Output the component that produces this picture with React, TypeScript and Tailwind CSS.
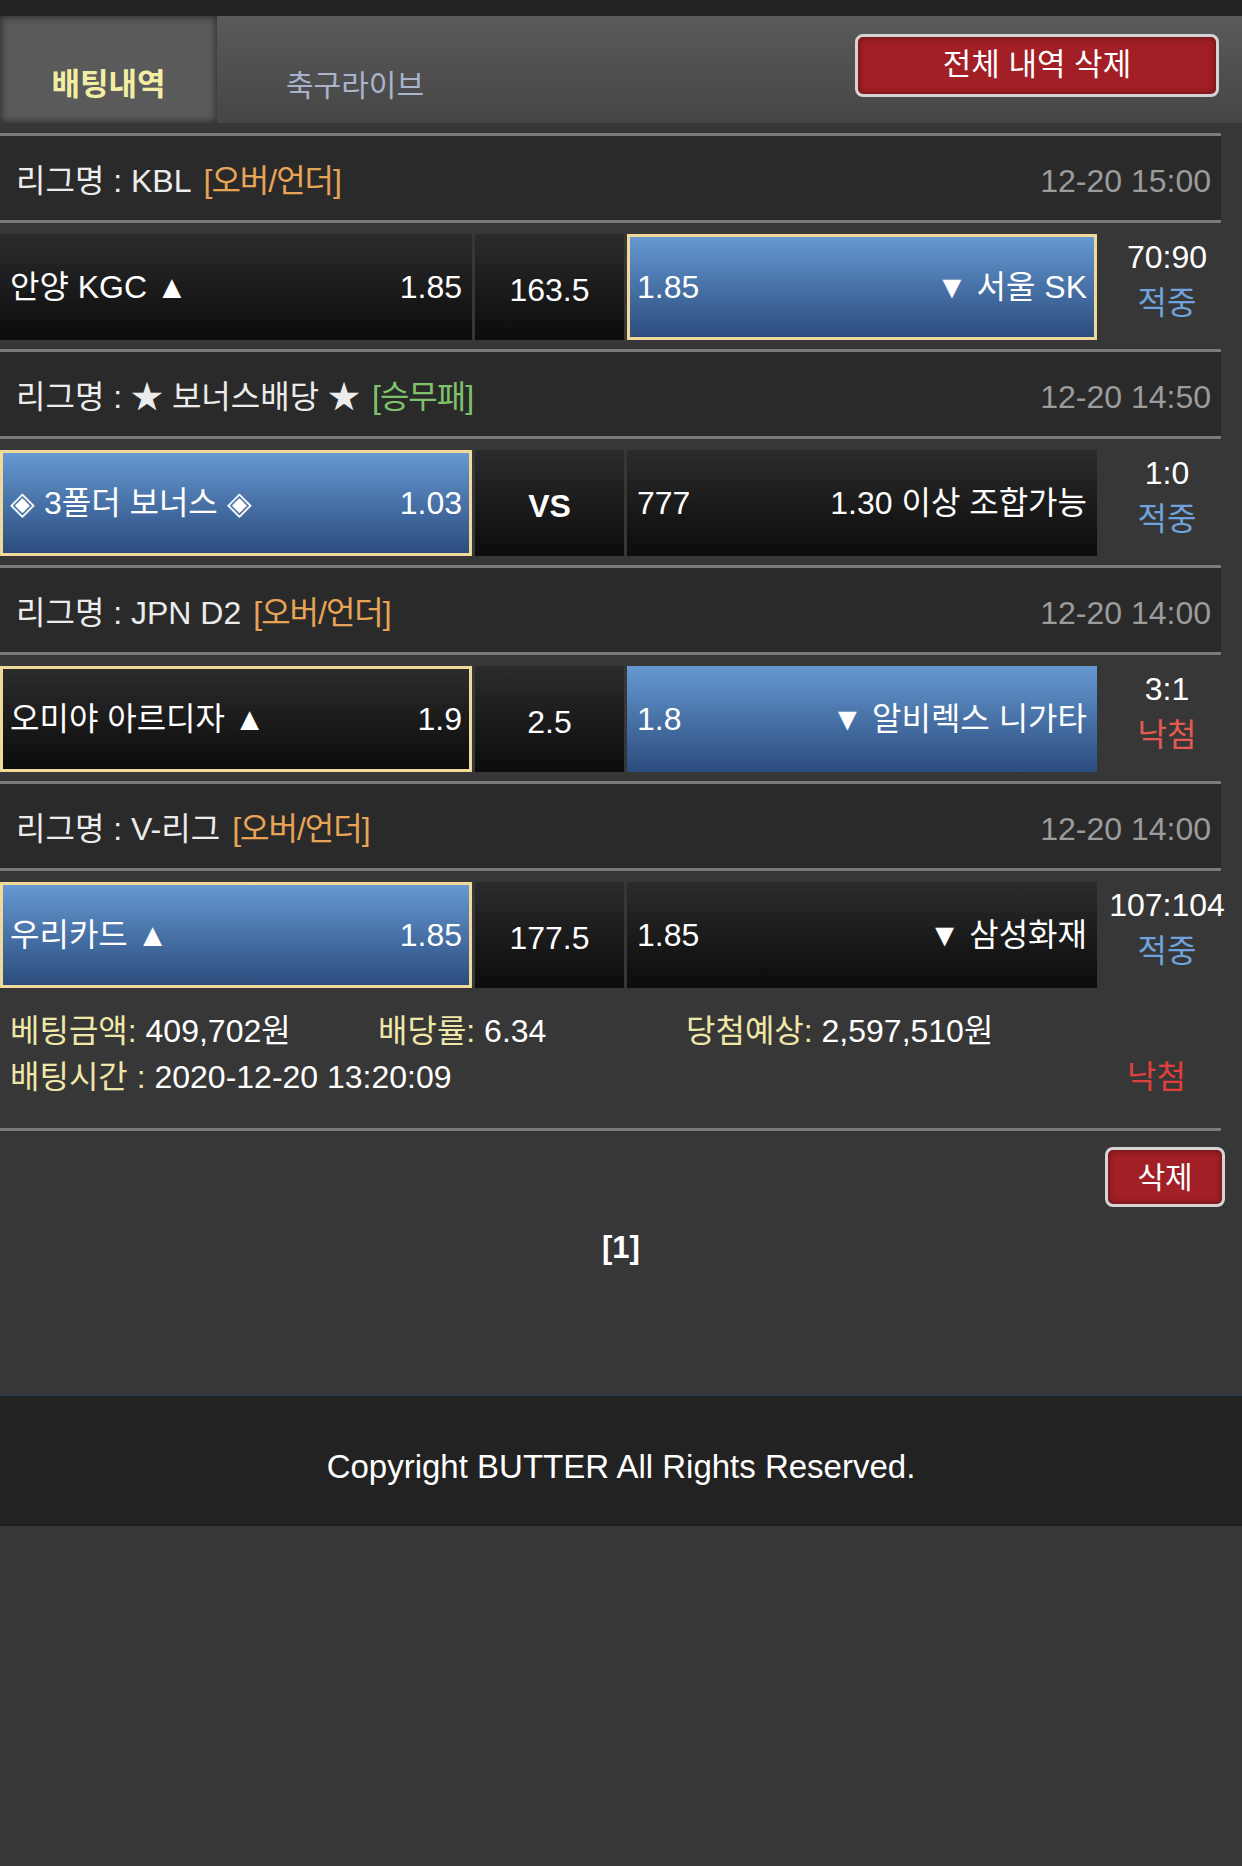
import clsx from "clsx";

type Tone = "dark" | "blue";

interface Side {
  name: string;
  odds: string;
  tone: Tone;
  picked?: boolean;
}

interface Game {
  league: string;
  tag: string;
  tagColor: string;
  time: string;
  home: Side;
  mid: string;
  midBold?: boolean;
  away: Side;
  score: string;
  result: "적중" | "낙첨";
}

const GAMES: Game[] = [
  {
    league: "KBL",
    tag: "[오버/언더]",
    tagColor: "text-[#e8a456]",
    time: "12-20 15:00",
    home: { name: "안양 KGC ▲", odds: "1.85", tone: "dark" },
    mid: "163.5",
    away: { name: "▼ 서울 SK", odds: "1.85", tone: "blue", picked: true },
    score: "70:90",
    result: "적중",
  },
  {
    league: "★ 보너스배당 ★",
    tag: "[승무패]",
    tagColor: "text-[#7fc26c]",
    time: "12-20 14:50",
    home: { name: "◈ 3폴더 보너스 ◈", odds: "1.03", tone: "blue", picked: true },
    mid: "VS",
    midBold: true,
    away: { name: "1.30 이상 조합가능", odds: "777", tone: "dark" },
    score: "1:0",
    result: "적중",
  },
  {
    league: "JPN D2",
    tag: "[오버/언더]",
    tagColor: "text-[#e8a456]",
    time: "12-20 14:00",
    home: { name: "오미야 아르디자 ▲", odds: "1.9", tone: "dark", picked: true },
    mid: "2.5",
    away: { name: "▼ 알비렉스 니가타", odds: "1.8", tone: "blue" },
    score: "3:1",
    result: "낙첨",
  },
  {
    league: "V-리그",
    tag: "[오버/언더]",
    tagColor: "text-[#e8a456]",
    time: "12-20 14:00",
    home: { name: "우리카드 ▲", odds: "1.85", tone: "blue", picked: true },
    mid: "177.5",
    away: { name: "▼ 삼성화재", odds: "1.85", tone: "dark" },
    score: "107:104",
    result: "적중",
  },
];

function OddsBox({ side, align }: { side: Side; align: "home" | "away" }) {
  return (
    <div
      className={clsx(
        "flex h-full items-center justify-between",
        side.tone === "blue"
          ? "bg-linear-to-b from-[#6699d2] to-[#2c4d7e]"
          : "bg-linear-to-b from-[#2c2c2c] to-[#0c0c0c]",
        side.picked ? "border-[3px] border-[#efda9a] px-[7px]" : "px-[10px]"
      )}
    >
      {align === "home" ? (
        <>
          <span>{side.name}</span>
          <span>{side.odds}</span>
        </>
      ) : (
        <>
          <span>{side.odds}</span>
          <span>{side.name}</span>
        </>
      )}
    </div>
  );
}

function GameBlock({ game }: { game: Game }) {
  return (
    <div>
      <div className="h-[3px] w-[1221px] bg-[#7a7a7a]" />
      <div className="flex h-[84px] w-[1221px] items-center justify-between bg-[#2a2a2a] pl-[16px] pr-[10px] pt-[6px]">
        <span>
          <span className="text-[#ececec]">리그명 : {game.league}</span>
          <span className={clsx("ml-[12px] tracking-[-1px]", game.tagColor)}>{game.tag}</span>
        </span>
        <span className="text-[#9c9c9c]">{game.time}</span>
      </div>
      <div className="h-[3px] w-[1221px] bg-[#7a7a7a]" />
      <div className="flex pt-[11px] pb-[9px] text-white">
        <div className="h-[106px] w-[472px]">
          <OddsBox side={game.home} align="home" />
        </div>
        <div
          className={clsx(
            "ml-[3px] flex h-[106px] w-[149px] items-center justify-center bg-linear-to-b from-[#2c2c2c] to-[#0c0c0c] pt-[6px]",
            game.midBold && "font-bold"
          )}
        >
          {game.mid}
        </div>
        <div className="ml-[3px] h-[106px] w-[470px]">
          <OddsBox side={game.away} align="away" />
        </div>
        <div className="flex w-[140px] flex-col items-center leading-[46px]">
          <span className="text-white">{game.score}</span>
          <span
            className={
              game.result === "적중" ? "text-[#6fa3dc]" : "text-[#e25a52]"
            }
          >
            {game.result}
          </span>
        </div>
      </div>
    </div>
  );
}

export default function App() {
  return (
    <div className="min-h-screen bg-[#373737] text-[32px] font-['Liberation_Sans','Noto_Sans_CJK_KR',sans-serif]">
      <div className="h-[16px] bg-[#222222]" />
      <header className="flex h-[107px] bg-linear-to-b from-[#5a5a5a] to-[#464646]">
        <div className="flex w-[217px] items-center justify-center bg-[#5a5a5a] pt-[32px] text-[31px] font-bold text-[#f2efa4] shadow-[inset_0_0_8px_rgba(0,0,0,0.65)]">
          배팅내역
        </div>
        <div className="flex w-[276px] items-center justify-center pt-[32px] text-[30px] text-[#a9b3cb]">
          축구라이브
        </div>
        <div className="flex flex-1 items-start justify-end pt-[18px] pr-[23px]">
          <button className="h-[63px] w-[364px] rounded-[8px] border-[3px] border-[#d4d4d4] bg-[#a11f25] text-[31px] text-white shadow-[inset_0_0_6px_rgba(0,0,0,0.45)]">
            전체 내역 삭제
          </button>
        </div>
      </header>
      <div className="h-[10px]" />

      {GAMES.map((g) => (
        <GameBlock key={g.league + g.time} game={g} />
      ))}

      <div className="w-[1221px] pt-[11px] pb-[28px] pl-[10px] leading-[46px]">
        <div className="flex">
          <span className="w-[368px]">
            <span className="text-[#efe7a8]">베팅금액:</span>
            <span className="text-white"> 409,702원</span>
          </span>
          <span className="w-[308px]">
            <span className="text-[#efe7a8]">배당률:</span>
            <span className="text-white"> 6.34</span>
          </span>
          <span>
            <span className="text-[#efe7a8]">당첨예상:</span>
            <span className="text-white"> 2,597,510원</span>
          </span>
        </div>
        <div className="flex justify-between pr-[35px]">
          <span>
            <span className="text-[#efe7a8]">배팅시간 :</span>
            <span className="text-white"> 2020-12-20 13:20:09</span>
          </span>
          <span className="text-[#e0403c]">낙첨</span>
        </div>
      </div>
      <div className="h-[3px] w-[1221px] bg-[#7a7a7a]" />

      <div className="h-[263px]">
        <div className="flex justify-end pt-[16px] pr-[17px]">
          <button className="h-[60px] w-[120px] rounded-[8px] border-[3px] border-[#d4d4d4] bg-[#a11f25] text-[30px] text-white shadow-[inset_0_0_6px_rgba(0,0,0,0.45)]">
            삭제
          </button>
        </div>
        <div className="mt-[18px] text-center text-[31px] font-bold text-white">
          [1]
        </div>
      </div>

      <footer className="flex h-[132px] items-center justify-center border-t-2 border-b-2 border-t-[#2e3a48] border-b-[#1a1e22] bg-[#222222] pt-[14px] text-[33px] text-white">
        Copyright BUTTER All Rights Reserved.
      </footer>
    </div>
  );
}
